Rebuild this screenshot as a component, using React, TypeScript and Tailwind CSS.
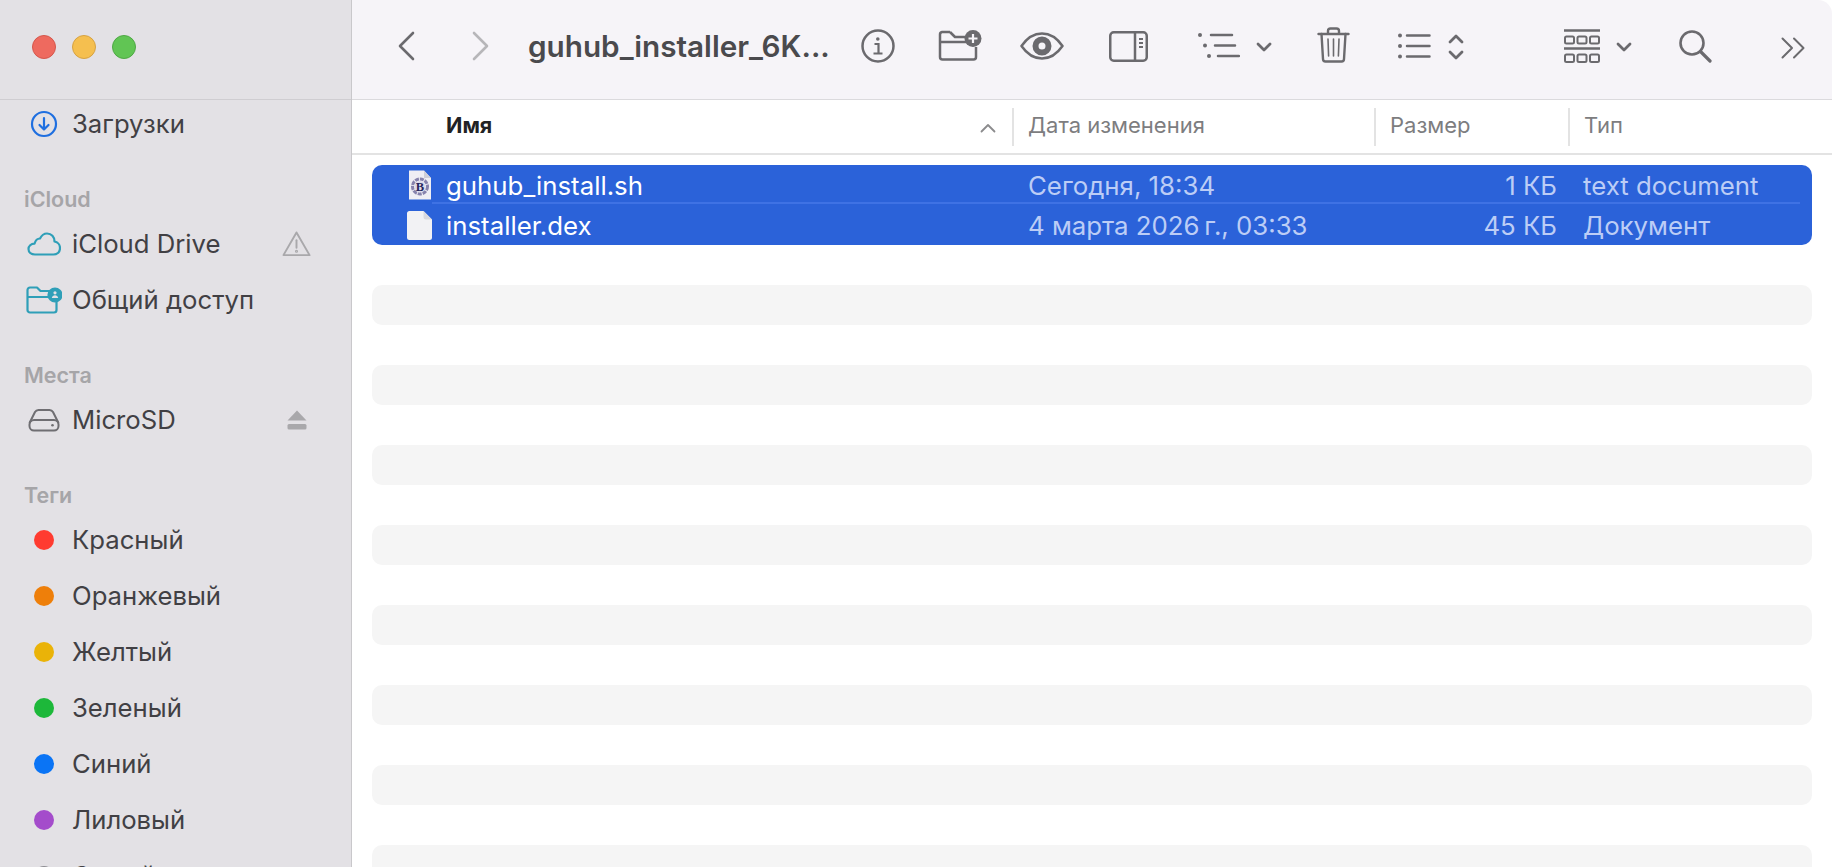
import React from "react";

const font = "font-['Inter','Noto_Sans',sans-serif]";
const ink = "#6b6a6e";

const SideItem = ({ icon, label, after }: { icon: React.ReactNode; label: string; after?: React.ReactNode }) => (
  <div className="flex h-[56px] shrink-0 items-center">
    <div className="ml-[15px] flex w-[58px] shrink-0 justify-center">
      <div className="flex w-[58px] justify-center">{icon}</div>
    </div>
    <span className="-ml-[1px] text-[25.7px] text-[#414044]">{label}</span>
    {after && <div className="ml-auto mr-[40px] flex w-[29px] justify-center">{after}</div>}
  </div>
);

const Dot = ({ color }: { color: string }) => <span className={`block h-5 w-5 rounded-full ${color}`} />;

const Heading = ({ children }: { children: string }) => (
  <div className="mb-[1px] mt-[31px] flex h-[32px] shrink-0 items-center pl-[24px] text-[21.5px] font-semibold text-[#a6a5a8]">
    {children}
  </div>
);

const Sidebar = () => (
  <aside className="flex h-full w-[352px] shrink-0 flex-col border-r border-[#c9c8cb] bg-[#e3e1e5]">
    <div className="flex h-[100px] shrink-0 items-center gap-[16px] border-b border-[#cfcdd1] pb-[6px] pl-[32px]">
      <span className="block h-6 w-6 rounded-full border border-[#d5574c] bg-[#ee6a5f]" />
      <span className="block h-6 w-6 rounded-full border border-[#d6a243] bg-[#f5bf4f]" />
      <span className="block h-6 w-6 rounded-full border border-[#4fa845] bg-[#61c554]" />
    </div>
    <div className="-mt-[4px] flex h-[56px] shrink-0 flex-col">
      <SideItem
        label="Загрузки"
        icon={
          <svg width="28" height="28" viewBox="0 0 28 28" fill="none" stroke="#1f6fe0" strokeWidth="2.2" strokeLinecap="round" strokeLinejoin="round">
            <circle cx="14" cy="14" r="12" />
            <path d="M14 8v11.5M9.5 15l4.5 4.5 4.5-4.5" />
          </svg>
        }
      />
    </div>
    <Heading>iCloud</Heading>
    <SideItem
      label="iCloud Drive"
      icon={
        <svg width="34" height="24" viewBox="0 0 34 24" fill="none" stroke="#2f9fb8" strokeWidth="2.2" strokeLinejoin="round">
          <path d="M8 22.500C4 22.500 1.500 20 1.500 17S4 11.700 7.500 11.700C8.500 8 11 6.500 13 6.500 14.500 3.500 17 1.500 20 1.500c4.500 0 7.500 3.500 7.500 8 3 .5 5.500 3 5.500 6.500 0 3.800-2.500 6.500-6.500 6.500z" />
        </svg>
      }
      after={
        <svg width="30" height="28" viewBox="0 0 30 28" fill="none" stroke="#a9a8ab" strokeWidth="2" strokeLinejoin="round" strokeLinecap="round">
          <path d="M15 2 L28.500 25.500 H1.500 Z" />
          <path d="M15 10v8" />
          <circle cx="15" cy="21.500" r=".6" />
        </svg>
      }
    />
    <SideItem
      label="Общий доступ"
      icon={
        <svg width="36" height="28" viewBox="0 0 36 28" fill="none" stroke="#2f9fb8" strokeWidth="2.2" strokeLinejoin="round">
          <path d="M28 26.500H4a2.500 2.500 0 0 1-2.500-2.500V4A2.500 2.500 0 0 1 4 1.500h7l3.500 3.500h10M2 11h22M30.500 16v8a2.500 2.500 0 0 1-2.500 2.500" />
          <circle cx="29" cy="9" r="6.500" fill="#2f9fb8" />
          <circle cx="29" cy="6.800" r="1.600" fill="#e3e1e5" stroke="none" />
          <path d="M25.800 12c.4-2 1.600-2.800 3.200-2.800s2.800.8 3.200 2.800z" fill="#e3e1e5" stroke="none" />
        </svg>
      }
    />
    <Heading>Места</Heading>
    <SideItem
      label="MicroSD"
      icon={
        <svg width="32" height="24" viewBox="0 0 32 24" fill="none" stroke="#6f6e72" strokeWidth="2" strokeLinejoin="round">
          <path d="M1.500 15 7 4a4 4 0 0 1 3.500-2h11a4 4 0 0 1 3.500 2l5.500 11" />
          <rect x="1.500" y="12" width="29" height="10.500" rx="4.500" />
          <circle cx="24.500" cy="17.200" r="1.300" fill="#6f6e72" stroke="none" />
        </svg>
      }
      after={
        <svg width="20" height="20" viewBox="0 0 20 20" fill="#a9a8ab">
          <path d="M10 0.500 19.500 10.500H.5z" />
          <rect x=".5" y="14" width="19" height="5.500" rx="1.500" />
        </svg>
      }
    />
    <Heading>Теги</Heading>
    <SideItem label="Красный" icon={<Dot color="bg-[#ff3b30]" />} />
    <SideItem label="Оранжевый" icon={<Dot color="bg-[#ee7f0a]" />} />
    <SideItem label="Желтый" icon={<Dot color="bg-[#eab308]" />} />
    <SideItem label="Зеленый" icon={<Dot color="bg-[#1db83a]" />} />
    <SideItem label="Синий" icon={<Dot color="bg-[#0a74f5]" />} />
    <SideItem label="Лиловый" icon={<Dot color="bg-[#a44ccb]" />} />
    <SideItem label="Серый" icon={<Dot color="bg-[#8e8e93]" />} />
  </aside>
);

const Chevron = ({ className, color = ink, flip }: { className: string; color?: string; flip?: boolean }) => (
  <svg className={className} width="17" height="30" viewBox="0 0 17 30" fill="none" stroke={color} strokeWidth="2.6" strokeLinecap="round" strokeLinejoin="round">
    <path d={flip ? "M2 2l13 13L2 28" : "M15 2 2 15l13 13"} />
  </svg>
);

const SmallChevron = ({ className }: { className: string }) => (
  <svg className={`${className} mt-[2px]`} width="16" height="10" viewBox="0 0 16 10" fill="none" stroke={ink} strokeWidth="2.800" strokeLinecap="round" strokeLinejoin="round">
    <path d="M2 2l6 6 6-6" />
  </svg>
);

const Toolbar = () => (
  <div className="flex h-[100px] shrink-0 items-center rounded-tr-[14px] border-b border-[#dbdadd] bg-[#f6f4f8] pb-[7px]">
    <Chevron className="ml-[46px]" />
    <Chevron className="ml-[57px]" color="#b7b6b9" flip />
    <span className="ml-[39px] w-[301px] whitespace-nowrap text-[29.7px] font-semibold text-[#4a4a4d]">guhub_installer_6K...</span>
    {/* info */}
    <svg className="ml-[32px]" width="34" height="34" viewBox="0 0 34 34" fill="none" stroke={ink} strokeWidth="2.500">
      <circle cx="17" cy="17" r="15.500" />
      <circle cx="16.800" cy="10" r="1.800" fill={ink} stroke="none" />
      <path d="M13.500 15h4v9M12.500 24.500h9" strokeWidth="2.200" />
    </svg>
    {/* new folder */}
    <svg className="ml-[43px]" width="44" height="32" viewBox="0 0 44 32" fill="none" stroke={ink} strokeWidth="2.500" strokeLinejoin="round">
      <path d="M30 12H2M12 2H4a2.500 2.500 0 0 0-2 2.500V27a2.500 2.500 0 0 0 2.500 2.500h31A2.500 2.500 0 0 0 38 27V17M2 12V4.500M12 2l5 5h12" />
      <circle cx="35" cy="8.500" r="8.500" fill={ink} stroke="none" />
      <path d="M35 4v9M30.500 8.500h9" stroke="#f6f4f8" strokeWidth="2.200" />
    </svg>
    {/* eye */}
    <svg className="ml-[38px]" width="44" height="28" viewBox="0 0 44 28" fill="none" stroke={ink} strokeWidth="2.500" strokeLinejoin="round">
      <path d="M1.500 14C7 6 14 1.500 22 1.500S37 6 42.500 14C37 22 30 26.500 22 26.500S7 22 1.500 14z" />
      <circle cx="22" cy="14" r="6.500" stroke={ink} strokeWidth="6" />
    </svg>
    {/* sidebar */}
    <svg className="ml-[45px]" width="39" height="31" viewBox="0 0 39 31" fill="none" stroke={ink} strokeWidth="2.500">
      <rect x="1.250" y="1.250" width="36.500" height="28.500" rx="3.500" />
      <path d="M26 1.500v28" />
      <path d="M30 8h4M30 12h4M30 16h4" strokeWidth="1.800" />
    </svg>
    {/* group by */}
    <svg className="ml-[50px]" width="42" height="26" viewBox="0 0 42 26" fill="none" stroke={ink} strokeWidth="2.500" strokeLinecap="round">
      <path d="M13 2h21M17 12.500h20M20 23h21" />
      <circle cx="2" cy="2" r="2" fill={ink} stroke="none" />
      <circle cx="7" cy="12.500" r="2" fill={ink} stroke="none" />
      <circle cx="11" cy="23" r="2" fill={ink} stroke="none" />
    </svg>
    <SmallChevron className="ml-[16px]" />
    {/* trash */}
    <svg className="ml-[45px] mb-[3px]" width="33" height="36" viewBox="0 0 33 36" fill="none" stroke={ink} strokeWidth="2.400" strokeLinecap="round" strokeLinejoin="round">
      <path d="M1.500 7h30M11 7V4a2.500 2.500 0 0 1 2.500-2.500h6A2.500 2.500 0 0 1 22 4v3" />
      <path d="M4.500 7l1.500 25a2.500 2.500 0 0 0 2.500 2.500h16a2.500 2.500 0 0 0 2.500-2.500l1.500-25" />
      <path d="M11 12l.6 17M16.500 12v17M22 12l-.6 17" strokeWidth="1.600" />
    </svg>
    {/* list */}
    <svg className="ml-[48px]" width="33" height="26" viewBox="0 0 33 26" fill="none" stroke={ink} strokeWidth="2.500" strokeLinecap="round">
      <path d="M9 2.500h22.500M9 13h22.500M9 23.500h22.500" />
      <circle cx="2" cy="2.500" r="2" fill={ink} stroke="none" />
      <circle cx="2" cy="13" r="2" fill={ink} stroke="none" />
      <circle cx="2" cy="23.500" r="2" fill={ink} stroke="none" />
    </svg>
    {/* sort up down */}
    <svg className="ml-[17px] mt-[1px]" width="16" height="28" viewBox="0 0 16 28" fill="none" stroke={ink} strokeWidth="2.800" strokeLinecap="round" strokeLinejoin="round">
      <path d="M2 9l6-6 6 6M2 19l6 6 6-6" />
    </svg>
    {/* view grid */}
    <svg className="ml-[100px]" width="36" height="35" viewBox="0 0 36 35" fill="none" stroke={ink} strokeWidth="2">
      <path d="M0 1.500h36M0 19.500h36" strokeWidth="2.400" />
      <rect x="1" y="7.500" width="9" height="7" rx="1.500" />
      <rect x="13.500" y="7.500" width="9" height="7" rx="1.500" />
      <rect x="26" y="7.500" width="9" height="7" rx="1.500" />
      <rect x="1" y="25.500" width="9" height="7.500" rx="1.500" />
      <rect x="13.500" y="25.500" width="9" height="7.500" rx="1.500" />
      <rect x="26" y="25.500" width="9" height="7.500" rx="1.500" />
    </svg>
    <SmallChevron className="ml-[16px]" />
    {/* search */}
    <svg className="ml-[47px]" width="33" height="33" viewBox="0 0 33 33" fill="none" stroke={ink} strokeWidth="2.600" strokeLinecap="round">
      <circle cx="13" cy="13" r="11.500" />
      <path d="M21.500 21.500 31 31" strokeWidth="3.200" />
    </svg>
    {/* more */}
    <svg className="ml-[69px] mt-[4px]" width="24" height="22" viewBox="0 0 24 22" fill="none" stroke={ink} strokeWidth="2" strokeLinecap="round" strokeLinejoin="round">
      <path d="M1.500 1.500 11 11l-9.500 9.500M13 1.500 22.500 11 13 20.500" />
    </svg>
  </div>
);

const HeaderCell = ({ label, className }: { label: string; className: string }) => (
  <div className={`flex h-[38px] items-center border-l-2 border-[#e3e3e3] pb-[2px] pl-[14px] text-[22px] text-[#7d7d7f] ${className}`}>{label}</div>
);

const ColumnHeader = () => (
  <div className="flex h-[55px] shrink-0 items-center border-b-2 border-[#e3e3e3] bg-white">
    <span className="-mt-[2px] ml-[94px] w-[51px] text-[21.5px] font-bold text-[#222224]">Имя</span>
    <svg className="ml-[483px] mt-[3px]" width="16" height="10" viewBox="0 0 16 10" fill="none" stroke="#8b8b8d" strokeWidth="1.800" strokeLinecap="round" strokeLinejoin="round">
      <path d="M1.500 8.500 8 2l6.500 6.500" />
    </svg>
    <HeaderCell label="Дата изменения" className="ml-[16px] w-[362px]" />
    <HeaderCell label="Размер" className="w-[194px]" />
    <HeaderCell label="Тип" className="flex-1" />
  </div>
);

const ShIcon = () => (
  <svg width="24" height="30" viewBox="0 0 24 30">
    <path d="M1 0.500h15L23 8v21.500H1z" fill="#efeef4" />
    <path d="M16 .5V8h7z" fill="#cfcfd8" />
    <circle cx="12" cy="16.500" r="7.500" fill="none" stroke="#8783ad" strokeWidth="3" strokeDasharray="4 1" />
    <circle cx="12" cy="16.500" r="5.500" fill="#dcdaea" />
    <text x="12" y="20.700" textAnchor="middle" fontFamily="'Liberation Serif',serif" fontWeight="700" fontSize="12.500" fill="#26265c">B</text>
  </svg>
);

const BlankIcon = () => (
  <svg width="25" height="29" viewBox="0 0 25 29">
    <path d="M2.500 0h14L25 8.500V26.500a2.500 2.500 0 0 1-2.500 2.500h-20A2.500 2.500 0 0 1 0 26.500V2.500A2.500 2.500 0 0 1 2.500 0z" fill="#f2f2f4" />
    <path d="M16.500 0v6a2.500 2.500 0 0 0 2.500 2.500h6z" fill="#d9d9de" />
  </svg>
);

const FileRow = ({ icon, name, date, size, kind, line }: { icon: React.ReactNode; name: string; date: string; size: string; kind: string; line?: boolean }) => (
  <div className="relative grid h-10 grid-cols-[656px_347px_182px_1fr] items-center pt-[2px] text-[25.8px]">
    <div className="-mt-[2px] flex items-center">
      <div className="flex w-[74px] justify-end pr-[14px]">{icon}</div>
      <span className="mt-[2px] text-white">{name}</span>
    </div>
    <span className="text-[#bccdf6]">{date}</span>
    <span className="text-right text-[#bccdf6]">{size}</span>
    <span className="pl-[26px] text-[#bccdf6]">{kind}</span>
    {line && <div className="absolute bottom-[1px] left-[60px] right-[12px] h-[2px] bg-[#3f72e4]" />}
  </div>
);

const Stripe = () => <div className="mt-10 h-10 shrink-0 rounded-[10px] bg-[#f5f5f5]" />;

const App = () => (
  <div className={`flex h-[867px] w-[1832px] overflow-hidden bg-white ${font}`}>
    <Sidebar />
    <main className="flex min-w-0 flex-1 flex-col">
      <Toolbar />
      <ColumnHeader />
      <div className="flex flex-col px-5 pt-[10px]">
        <div className="flex h-20 shrink-0 flex-col overflow-hidden rounded-[10px] bg-[#2b62d9]">
          <FileRow icon={<ShIcon />} name="guhub_install.sh" date="Сегодня, 18:34" size="1 КБ" kind="text document" line />
          <FileRow icon={<BlankIcon />} name="installer.dex" date={"4 марта 2026\u2009г., 03:33"} size="45 КБ" kind="Документ" />
        </div>
        <Stripe />
        <Stripe />
        <Stripe />
        <Stripe />
        <Stripe />
        <Stripe />
        <Stripe />
        <Stripe />
      </div>
    </main>
  </div>
);

export default App;
